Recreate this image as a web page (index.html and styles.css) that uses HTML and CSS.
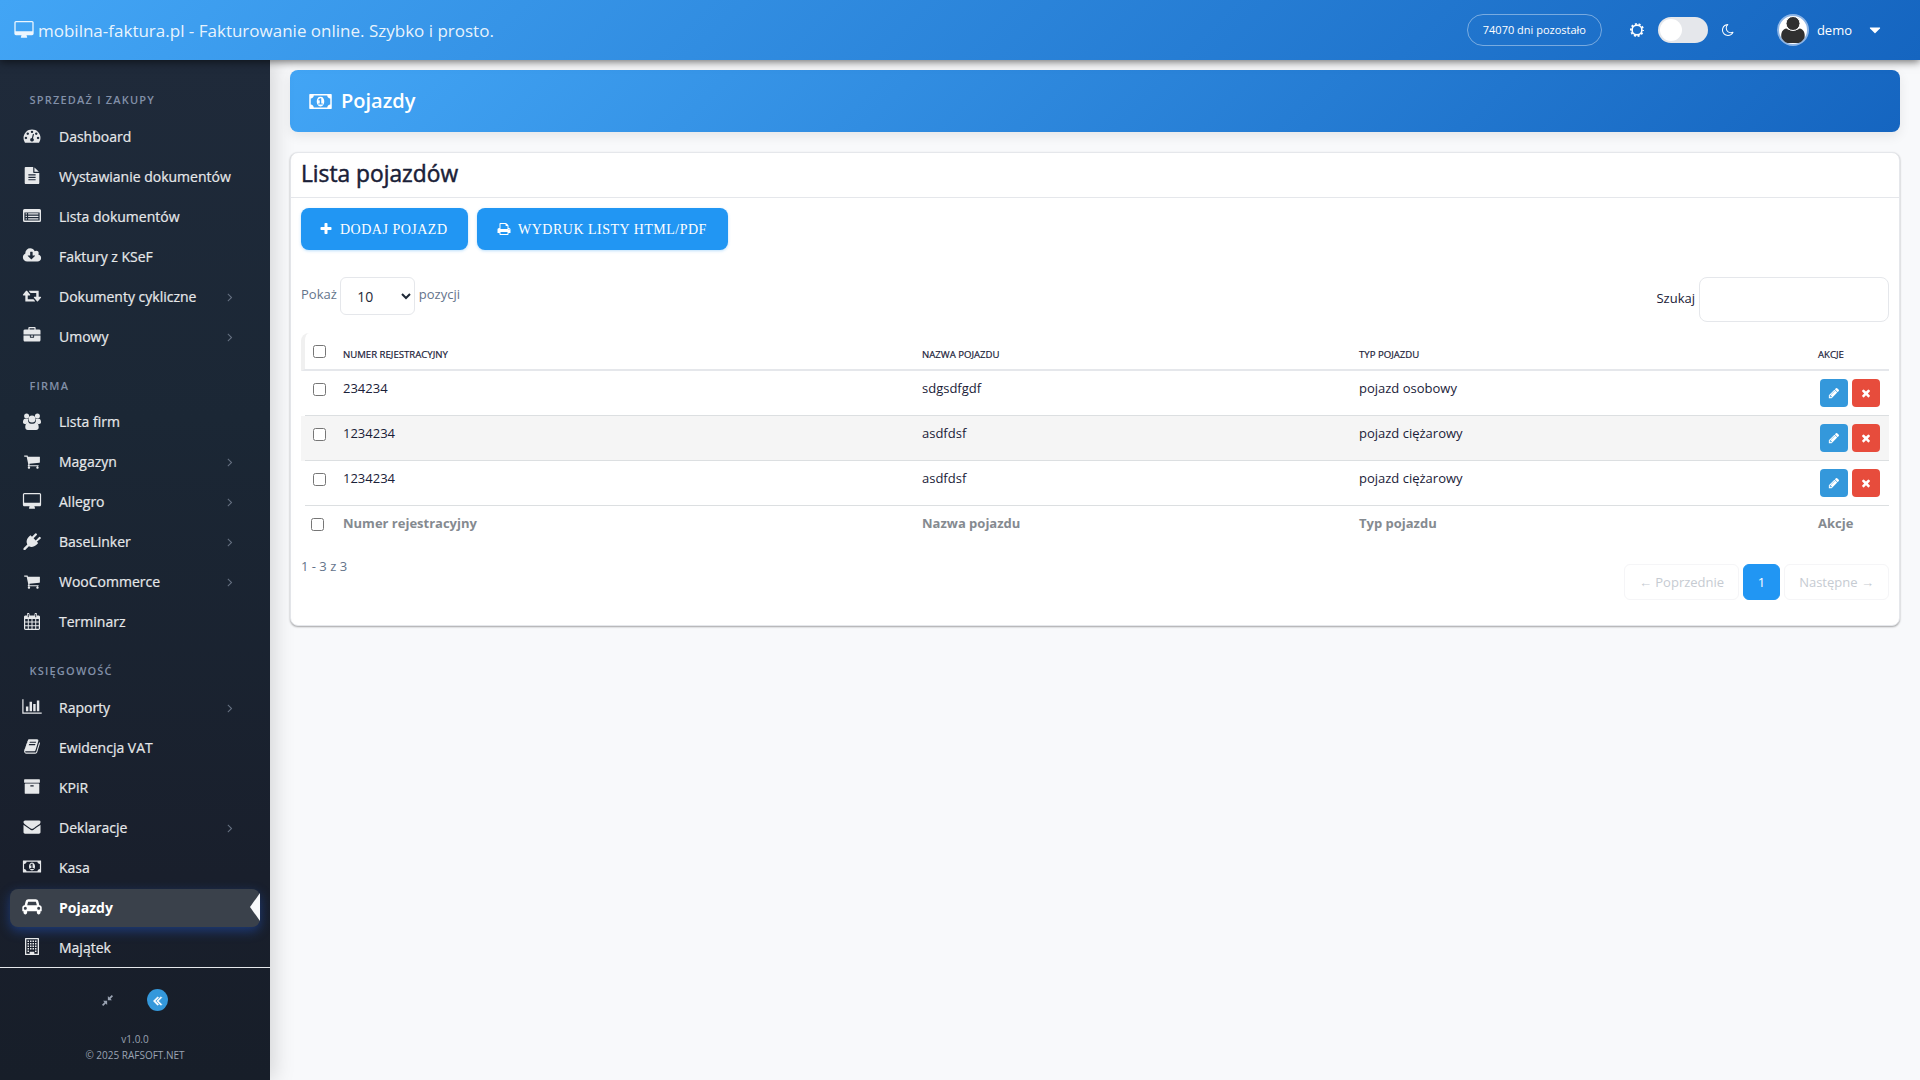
FILE: index.html
```html
<!DOCTYPE html>
<html lang="pl">
<head>
    <meta charset="UTF-8">
    <meta name="viewport" content="width=device-width, initial-scale=1.0">
    <title>Pojazdy - mobilna-faktura.pl</title>
    <link rel="stylesheet" href="styles.css">
</head>
<body>
    <!-- Icon sprite -->
    <svg class="sprite" width="0" height="0">
        <symbol id="desktop" viewBox="-64 0 1920 1792"><path d="M1728 992v-832q0-13-9.500-22.500t-22.500-9.500h-1600q-13 0-22.500 9.500t-9.500 22.500v832q0 13 9.500 22.500t22.500 9.500h1600q13 0 22.500-9.500t9.500-22.500zm128-832v1088q0 66-47 113t-113 47h-544q0 37 16 77.500t32 71 16 43.500q0 26-19 45t-45 19h-512q-26 0-45-19t-19-45q0-14 16-44t32-70 16-78h-544q-66 0-113-47t-47-113v-1088q0-66 47-113t113-47h1600q66 0 113 47t47 113z"/></symbol>
        <symbol id="moon" viewBox="0 0 1792 1792"><path d="M1390 1303q-54 9-110 9-182 0-337-90t-245-245-90-337q0-192 104-357-201 60-328.500 229t-127.500 384q0 130 51 248.500t136.500 204 204 136.500 248.500 51q144 0 273.500-61.500t220.500-171.500zm203-85q-94 203-283.500 324.500t-413.500 121.500q-156 0-298-61t-245-164-164-245-61-298q0-153 57.500-292.500t156-241.500 235.500-164.500 290-68.500q44-2 61 39 18 41-15 72-86 78-131.500 181.500t-45.500 218.500q0 148 73 273t198 198 273 73q118 0 228-51 41-18 72 13 14 14 17.500 34t-4.500 38z"/></symbol>
        <symbol id="sun" viewBox="0 0 14 14"><circle cx="7" cy="7" r="4.900" fill="none" stroke="currentColor" stroke-width="1.600"/><circle cx="7" cy="7" r="6.100" fill="none" stroke="currentColor" stroke-width="1.800" stroke-dasharray="2 1.833" stroke-dashoffset="1"/></symbol>
        <symbol id="plus" viewBox="0 0 1792 1792"><path d="M1600 736v192q0 40-28 68t-68 28h-416v416q0 40-28 68t-68 28h-192q-40 0-68-28t-28-68v-416h-416q-40 0-68-28t-28-68v-192q0-40 28-68t68-28h416v-416q0-40 28-68t68-28h192q40 0 68 28t28 68v416h416q40 0 68 28t28 68z"/></symbol>
        <symbol id="times" viewBox="0 0 1792 1792"><path d="M1490 1322q0 40-28 68l-136 136q-28 28-68 28t-68-28l-294-294-294 294q-28 28-68 28t-68-28l-136-136q-28-28-28-68t28-68l294-294-294-294q-28-28-28-68t28-68l136-136q28-28 68-28t68 28l294 294 294-294q28-28 68-28t68 28l136 136q28 28 28 68t-28 68l-294 294 294 294q28 28 28 68z"/></symbol>
        <symbol id="pencil" viewBox="0 0 1792 1792"><path d="M491 1536l91-91-235-235-91 91v107h128v128h107zm523-928q0-22-22-22-10 0-17 7l-542 542q-7 7-7 17 0 22 22 22 10 0 17-7l542-542q7-7 7-17zm-54-192l416 416-832 832h-416v-416zm683 96q0 53-37 90l-166 166-416-416 166-165q36-38 90-38 53 0 91 38l235 234q37 39 37 91z"/></symbol>
        <symbol id="print" viewBox="0 0 1792 1792"><path d="M448 1536h896v-256h-896v256zm0-640h896v-384h-160q-40 0-68-28t-28-68v-160h-640v640zm1152 64q0-26-19-45t-45-19-45 19-19 45 19 45 45 19 45-19 19-45zm128 0v416q0 13-9.500 22.500t-22.500 9.500h-224v160q0 40-28 68t-68 28h-960q-40 0-68-28t-28-68v-160h-224q-13 0-22.500-9.500t-9.500-22.500v-416q0-79 56.500-135.500t135.500-56.500h64v-544q0-40 28-68t68-28h672q40 0 88 20t76 48l152 152q28 28 48 76t20 88v256h64q79 0 135.500 56.500t56.500 135.500z"/></symbol>
        <symbol id="angle-right" viewBox="0 0 1792 1792"><path d="M1171 960q0 13-10 23l-466 466q-10 10-23 10t-23-10l-50-50q-10-10-10-23t10-23l393-393-393-393q-10-10-10-23t10-23l50-50q10-10 23-10t23 10l466 466q10 10 10 23z"/></symbol>
        <symbol id="double-left" viewBox="0 0 1792 1792"><path d="M1011 1376q0 13-10 23l-50 50q-10 10-23 10t-23-10l-466-466q-10-10-10-23t10-23l466-466q10-10 23-10t23 10l50 50q10 10 10 23t-10 23l-393 393 393 393q10 10 10 23zm384 0q0 13-10 23l-50 50q-10 10-23 10t-23-10l-466-466q-10-10-10-23t10-23l466-466q10-10 23-10t23 10l50 50q10 10 10 23t-10 23l-393 393 393 393q10 10 10 23z"/></symbol>
        <symbol id="caret-down" viewBox="0 0 1792 1792"><path d="M1408 704q0 26-19 45l-448 448q-19 19-45 19t-45-19l-448-448q-19-19-19-45t19-45 45-19h896q26 0 45 19t19 45z"/></symbol>
        <symbol id="compress" viewBox="0 0 12 12"><path d="M5.600 6.400v4.400l-1.500-1.500L1.300 12 0 10.700l2.700-2.800-1.500-1.500zM6.400 5.600V1.200l1.500 1.500L10.700 0 12 1.300 9.300 4.100l1.500 1.500z"/></symbol>
        <symbol id="cart" viewBox="0 0 1792 1792"><path d="M704 1536q0 52-38 90t-90 38-90-38-38-90 38-90 90-38 90 38 38 90zm896 0q0 52-38 90t-90 38-90-38-38-90 38-90 90-38 90 38 38 90zm128-1088v512q0 24-16.500 42.500t-40.500 21.500l-1044 122q13 60 13 70 0 16-24 64h920q26 0 45 19t19 45-19 45-45 19h-1024q-26 0-45-19t-19-45q0-11 8-31.500t16-36 21.500-40 15.500-29.500l-177-823h-204q-26 0-45-19t-19-45 19-45 45-19h256q16 0 28.500 6.500t19.500 15.500 13 24.500 8 26 5.500 29.500 4.500 26h1201q26 0 45 19t19 45z"/></symbol>
        <symbol id="file" viewBox="0 0 1792 1792"><path d="M1596 476q14 14 28 36h-472v-472q22 14 36 28zm-476 164h544v1056q0 40-28 68t-68 28h-1344q-40 0-68-28t-28-68v-1600q0-40 28-68t68-28h800v544q0 40 28 68t68 28zm160 736v-64q0-14-9-23t-23-9h-704q-14 0-23 9t-9 23v64q0 14 9 23t23 9h704q14 0 23-9t9-23zm0-256v-64q0-14-9-23t-23-9h-704q-14 0-23 9t-9 23v64q0 14 9 23t23 9h704q14 0 23-9t9-23zm0-256v-64q0-14-9-23t-23-9h-704q-14 0-23 9t-9 23v64q0 14 9 23t23 9h704q14 0 23-9t9-23z"/></symbol>
        <symbol id="tachometer" viewBox="0 0 1792 1792"><path d="M384 1152q0-53-37.500-90.500t-90.500-37.500-90.500 37.500-37.500 90.500 37.500 90.500 90.500 37.500 90.500-37.500 37.500-90.500zm192-448q0-53-37.500-90.500t-90.500-37.500-90.500 37.500-37.500 90.500 37.500 90.500 90.500 37.500 90.500-37.500 37.500-90.500zm428 481l101-382q6-26-7.500-48.500t-38.500-29.500-48 6.500-30 39.500l-101 382q-60 5-107 43.500t-63 98.500q-20 77 20 146t117 89 146-20 89-117q16-60-6-117t-72-91zm660-33q0-53-37.500-90.500t-90.500-37.500-90.500 37.500-37.500 90.500 37.500 90.500 90.500 37.500 90.500-37.500 37.500-90.500zm-640-640q0-53-37.500-90.500t-90.500-37.500-90.500 37.500-37.500 90.500 37.500 90.500 90.500 37.500 90.500-37.500 37.500-90.500zm448 192q0-53-37.500-90.500t-90.500-37.500-90.500 37.500-37.500 90.500 37.500 90.500 90.500 37.500 90.500-37.500 37.500-90.500zm320 448q0 261-141 483-19 29-54 29h-1402q-35 0-54-29-141-221-141-483 0-182 71-348t191-286 286-191 348-71 348 71 286 191 191 286 71 348z"/></symbol>
        <symbol id="list-alt" viewBox="0 0 18 17"><path fill-rule="evenodd" d="M1.500 2h15A1.500 1.500 0 0 1 18 3.500v10a1.500 1.500 0 0 1-1.500 1.500h-15A1.500 1.500 0 0 1 0 13.500v-10A1.500 1.500 0 0 1 1.500 2zM1.400 5.400v8.200h15.200V5.400zM2.600 6.300h1.300v1.200H2.600zm2.500 0h10.300v1.200H5.100zM2.600 8.800h1.300V10H2.600zm2.500 0h10.300V10H5.100zm-2.500 2.500h1.300v1.200H2.600zm2.500 0h10.300v1.200H5.100z"/></symbol>
        <symbol id="cloud" viewBox="0 0 1920 1792"><path d="M1280 928q0-14-9-23t-23-9h-224v-352q0-13-9.500-22.500t-22.500-9.500h-192q-13 0-22.500 9.500t-9.500 22.500v352h-224q-13 0-22.500 9.500t-9.500 22.500q0 14 9 23l352 352q9 9 23 9t23-9l351-351q10-12 10-24zm640 224q0 159-112.500 271.500t-271.500 112.500h-1088q-185 0-316.500-131.500t-131.500-316.500q0-130 70-240t188-165q-2-30-2-43 0-212 150-362t362-150q156 0 285.500 87t188.500 231q71-62 166-62 106 0 181 75t75 181q0 76-41 138 130 31 213.500 135.500t83.500 238.500z"/></symbol>
        <symbol id="retweet" viewBox="0 0 1920 1792"><path d="M1280 1504q0 13-9.500 22.500t-22.500 9.500h-960q-8 0-13.500-2t-9-7-5.500-8-3-11.500-1-11.500v-600h-192q-26 0-45-19t-19-45q0-24 15-41l320-384q19-22 49-22t49 22l320 384q15 17 15 41 0 26-19 45t-45 19h-192v384h576q16 0 25 11l160 192q7 10 7 21zm640-416q0 24-15 41l-320 384q-20 23-49 23t-49-23l-320-384q-15-17-15-41 0-26 19-45t45-19h192v-384h-576q-16 0-25-12l-160-192q-7-9-7-20 0-13 9.500-22.500t22.500-9.500h960q8 0 13.500 2t9 7 5.500 8 3 11.500 1 11.500v600h192q26 0 45 19t19 45z"/></symbol>
        <symbol id="briefcase" viewBox="0 0 1792 1792"><path d="M640 256h512v-128h-512v128zm1152 640v480q0 66-47 113t-113 47h-1472q-66 0-113-47t-47-113v-480h672v160q0 26 19 45t45 19h320q26 0 45-19t19-45v-160h672zm-768 0v128h-256v-128h256zm768-480v384h-1792v-384q0-66 47-113t113-47h352v-160q0-40 28-68t68-28h576q40 0 68 28t28 68v160h352q66 0 113 47t47 113z"/></symbol>
        <symbol id="users" viewBox="0 0 18 17"><circle cx="3.600" cy="2.900" r="2.500"/><circle cx="14.400" cy="2.900" r="2.500"/><path d="M2 5.700h3.200a4.500 4.500 0 0 0 .7 4.100C4.600 9.900 3.800 10.300 3 11H1.800C.7 11 0 10.400 0 9.300 0 7.600.5 5.700 2 5.700zM16 5.700h-3.200a4.500 4.500 0 0 1-.7 4.100c1.300.1 2.100.5 2.900 1.200h1.200c1.100 0 1.800-.6 1.800-1.700 0-1.700-.5-3.600-2-3.600z"/><circle cx="9" cy="6.100" r="3.500"/><path d="M5.200 9.500c1 .8 2.200 1.300 3.800 1.300s2.800-.5 3.800-1.300c2.200 0 2.900 2.600 2.900 4.900 0 1.500-1 2.500-2.500 2.500H4.800c-1.500 0-2.500-1-2.500-2.500 0-2.300.7-4.900 2.900-4.900z"/></symbol>
        <symbol id="plug" viewBox="0 0 18 17"><path d="M17.500 4.200a1.100 1.100 0 0 0-1.600 0L12.700 7.400 10.600 5.300l3.200-3.200A1.150 1.150 0 0 0 12.200.5L9 3.700 7.500 2.200 6.100 3.600C3.600 6.100 2.900 9.100 4.300 11.500L.5 15.300V17h1.700l3.700-3.700c2.400 1.400 5.400.7 7.900-1.800l1.400-1.400-1.400-1.400 3.700-3a1.100 1.100 0 0 0 0-1.500z"/></symbol>
        <symbol id="calendar" viewBox="0 0 16 17"><path fill-rule="evenodd" d="M1.500 2.500H3V1.200C3 .5 3.500 0 4.200 0s1.300.5 1.300 1.200v1.300h5V1.200c0-.7.500-1.200 1.300-1.200S13 .5 13 1.200v1.300h1.500c.8 0 1.500.6 1.500 1.300v11.800c0 .8-.7 1.400-1.500 1.400h-13C.7 17 0 16.400 0 15.600V3.800c0-.7.700-1.300 1.500-1.300zM1.200 6.100v2.500h2.600V6.100zm3.600 0v2.500h2.700V6.100zm3.700 0v2.500h2.700V6.100zm3.700 0v2.500h2.600V6.100zM1.200 9.500v2.700h2.600V9.500zm3.600 0v2.700h2.700V9.500zm3.700 0v2.700h2.700V9.500zm3.700 0v2.700h2.600V9.500zM1.200 13.200v2.600h2.600v-2.600zm3.600 0v2.600h2.700v-2.600zm3.700 0v2.600h2.700v-2.600zm3.700 0v2.600h2.600v-2.600zM3.800 1v3.200h.9V1zm7.500 0v3.200h.9V1z"/></symbol>
        <symbol id="chart" viewBox="0 0 2048 1792"><path d="M640 896v512h-256v-512h256zm384-512v1024h-256v-1024h256zm1024 1152v128h-2048v-1536h128v1408h1920zm-640-896v768h-256v-768h256zm384-384v1152h-256v-1152h256z"/></symbol>
        <symbol id="book" viewBox="0 0 1792 1792"><path d="M1703 478q40 57 18 129l-275 906q-19 64-76.500 107.500t-122.500 43.500h-923q-77 0-148.500-53.500t-99.500-131.500q-24-67-2-127 0-4 3-27t4-37q1-8-3-21.500t-3-19.500q2-11 8-21t16.500-23.500 16.500-23.500q23-38 45-91.500t30-91.500q3-10 .5-30t-.5-28q3-11 17-28t17-23q21-36 42-92t25-90q1-9-2.500-32t.5-28q4-13 22-30.500t22-22.500q19-26 42.500-84.500t27.500-96.500q1-8-3-25.500t-2-26.500q2-8 9-18t18-23 17-21q8-12 16.500-30.500t15-35 16-36 19.500-32 26.500-23.500 36-11.500 47.500 5.500l-1 3q38-9 51-9h761q74 0 114 56t18 130l-274 906q-36 119-71.500 153.500t-128.500 34.500h-869q-27 0-38 15-11 16-1 43 24 70 144 70h923q29 0 56-15.500t35-41.500l300-987q7-22 5-57 38 15 59 43zm-1064 2q-4 13 2 22.500t20 9.500h608q13 0 25.500-9.500t16.500-22.500l21-64q4-13-2-22.500t-20-9.500h-608q-13 0-25.500 9.500t-16.500 22.500zm-83 256q-4 13 2 22.500t20 9.500h608q13 0 25.500-9.500t16.500-22.500l21-64q4-13-2-22.500t-20-9.500h-608q-13 0-25.500 9.500t-16.500 22.500z"/></symbol>
        <symbol id="archive" viewBox="0 0 1792 1792"><path d="M1088 832q0-26-19-45t-45-19h-256q-26 0-45 19t-19 45 19 45 45 19h256q26 0 45-19t19-45zm576-192v960q0 26-19 45t-45 19h-1408q-26 0-45-19t-19-45v-960q0-26 19-45t45-19h1408q26 0 45 19t19 45zm64-448v256q0 26-19 45t-45 19h-1536q-26 0-45-19t-19-45v-256q0-26 19-45t45-19h1536q26 0 45 19t19 45z"/></symbol>
        <symbol id="envelope" viewBox="0 0 1792 1792"><path d="M1792 710v794q0 66-47 113t-113 47h-1472q-66 0-113-47t-47-113v-794q44 49 101 87 362 246 497 345 57 42 92.500 65.500t94.500 48 110 24.500h2q51 0 110-24.500t94.500-48 92.500-65.500q170-123 498-345 57-39 100-87zm0-294q0 79-49 151t-122 123q-376 261-468 325-10 7-42.500 31t-54 38.500-52 32.500-57.500 27-50 9h-2q-23 0-50-9t-57.500-27-52-32.500-54-38.500-42.500-31q-91-64-262-182.500t-205-142.500q-62-42-117-115.500t-55-136.500q0-78 41.500-130t118.500-52h1472q65 0 112.500 47t47.500 113z"/></symbol>
        <symbol id="money" viewBox="0 0 1920 1792"><path d="M768 1152h384v-96h-128v-448h-114l-148 137 77 80q42-37 55-57h2v288h-128v96zm512-256q0 70-21 142t-59.500 134-101.500 101-138 39-138-39-101.500-101-59.500-134-21-142 21-142 59.500-134 101.500-101 138-39 138 39 101.500 101 59.500 134 21 142zm512 256v-512q-106 0-181-75t-75-181h-1152q0 106-75 181t-181 75v512q106 0 181 75t75 181h1152q0-106 75-181t181-75zm128-832v1152q0 26-19 45t-45 19h-1792q-26 0-45-19t-19-45v-1152q0-26 19-45t45-19h1792q26 0 45 19t19 45z"/></symbol>
        <symbol id="car" viewBox="0 0 2048 1792"><path d="M480 1088q0-66-47-113t-113-47-113 47-47 113 47 113 113 47 113-47 47-113zm36-320h1016l-89-357q-2-8-14-17.500t-21-9.500h-768q-9 0-21 9.500t-14 17.500zm1372 320q0-66-47-113t-113-47-113 47-47 113 47 113 113 47 113-47 47-113zm160-96v384q0 14-9 23t-23 9h-96v128q0 80-56 136t-136 56-136-56-56-136v-128h-1024v128q0 80-56 136t-136 56-136-56-56-136v-128h-96q-14 0-23-9t-9-23v-384q0-93 65.500-158.500t158.500-65.500h28l105-419q23-94 104-157.500t179-63.500h768q98 0 179 63.500t104 157.500l105 419h28q93 0 158.500 65.500t65.500 158.500z"/></symbol>
        <symbol id="building" viewBox="0 0 14 17"><path fill-rule="evenodd" d="M.6 0h12.800c.3 0 .6.300.6.600v15.800c0 .3-.3.600-.6.600H.6c-.3 0-.6-.3-.6-.6V.6C0 .3.300 0 .6 0zM1.300 1.300v14.400h3.400v-2h4.600v2h3.400V1.300z"/><path d="M2.500 2.400h1.500v1.500H2.500zm2.500 0h1.500v1.500H5zm2.500 0H9v1.500H7.500zm2.500 0h1.500v1.500H10zM2.500 4.900h1.500v1.500H2.500zm2.500 0h1.500v1.500H5zm2.500 0H9v1.500H7.500zm2.500 0h1.500v1.500H10zM2.500 7.400h1.500v1.500H2.500zm2.500 0h1.500v1.500H5zm2.500 0H9v1.500H7.500zm2.500 0h1.500v1.500H10zM2.500 9.900h1.500v1.500H2.500zm2.500 0h1.500v1.500H5zm2.500 0H9v1.500H7.500zm2.500 0h1.500v1.500H10zM2.500 12.400h1.500v1.500H2.500zm7.500 0h1.500v1.500H10z"/></symbol>
    </svg>

    <header class="topbar">
        <a class="brand" href="#"><svg><use href="#desktop"/></svg><span>mobilna-faktura.pl - Fakturowanie online. Szybko i prosto.</span></a>
        <div class="topbar-right">
            <span class="days-left">74070 dni pozostało</span>
            <div class="theme-switch">
                <svg><use href="#sun"/></svg>
                <span class="switch"><span class="knob"></span></span>
                <svg><use href="#moon"/></svg>
            </div>
            <a class="user" href="#">
                <svg class="avatar" viewBox="0 0 32 32"><circle cx="16" cy="16" r="15" fill="#fff" stroke="#8db5e6" stroke-width="2"/><path d="M4.500 24c-1-5 1-9 5-9.500 2 2.500 11 2.500 13 0 4 .5 6 4.500 5 9.500-2 3-4 4.500-6 5h-11c-2-.5-4-2-6-5z" fill="#303030"/><circle cx="16" cy="9.500" r="7" fill="#303030" stroke="#fff"/></svg>
                <span>demo</span>
                <svg class="caret"><use href="#caret-down"/></svg>
            </a>
        </div>
    </header>

    <div class="layout">
        <aside class="sidebar">
            <nav class="menu">
                <h6>Sprzedaż i zakupy</h6>
                <a href="#"><svg><use href="#tachometer"/></svg><span>Dashboard</span></a>
                <a href="#"><svg><use href="#file"/></svg><span>Wystawianie dokumentów</span></a>
                <a href="#"><svg><use href="#list-alt"/></svg><span>Lista dokumentów</span></a>
                <a href="#"><svg><use href="#cloud"/></svg><span>Faktury z KSeF</span></a>
                <a href="#"><svg><use href="#retweet"/></svg><span>Dokumenty cykliczne</span><svg class="arrow"><use href="#angle-right"/></svg></a>
                <a href="#"><svg><use href="#briefcase"/></svg><span>Umowy</span><svg class="arrow"><use href="#angle-right"/></svg></a>
                <h6>Firma</h6>
                <a href="#"><svg><use href="#users"/></svg><span>Lista firm</span></a>
                <a href="#"><svg><use href="#cart"/></svg><span>Magazyn</span><svg class="arrow"><use href="#angle-right"/></svg></a>
                <a href="#"><svg><use href="#desktop"/></svg><span>Allegro</span><svg class="arrow"><use href="#angle-right"/></svg></a>
                <a href="#"><svg><use href="#plug"/></svg><span>BaseLinker</span><svg class="arrow"><use href="#angle-right"/></svg></a>
                <a href="#"><svg><use href="#cart"/></svg><span>WooCommerce</span><svg class="arrow"><use href="#angle-right"/></svg></a>
                <a href="#"><svg><use href="#calendar"/></svg><span>Terminarz</span></a>
                <h6>Księgowość</h6>
                <a href="#"><svg><use href="#chart"/></svg><span>Raporty</span><svg class="arrow"><use href="#angle-right"/></svg></a>
                <a href="#"><svg><use href="#book"/></svg><span>Ewidencja VAT</span></a>
                <a href="#"><svg><use href="#archive"/></svg><span>KPiR</span></a>
                <a href="#"><svg><use href="#envelope"/></svg><span>Deklaracje</span><svg class="arrow"><use href="#angle-right"/></svg></a>
                <a href="#"><svg><use href="#money"/></svg><span>Kasa</span></a>
                <a href="#" class="active"><svg><use href="#car"/></svg><span>Pojazdy</span></a>
                <a href="#"><svg><use href="#building"/></svg><span>Majątek</span></a>
            </nav>
            <div class="sidebar-footer">
                <div class="sidebar-tools">
                    <svg class="compress"><use href="#compress"/></svg>
                    <span class="collapse"><svg><use href="#double-left"/></svg></span>
                </div>
                <p>v1.0.0</p>
                <p>© 2025 RAFSOFT.NET</p>
            </div>
        </aside>

        <main class="content">
            <div class="page-header">
                <svg><use href="#money"/></svg>
                <h1>Pojazdy</h1>
            </div>

            <section class="card">
                <h2>Lista pojazdów</h2>
                <div class="card-body">
                    <div class="buttons">
                        <a class="btn" href="#"><svg><use href="#plus"/></svg><span>DODAJ POJAZD</span></a>
                        <a class="btn btn-print" href="#"><svg><use href="#print"/></svg><span>WYDRUK LISTY HTML/PDF</span></a>
                    </div>

                    <div class="filters">
                        <label class="length">Pokaż
                            <select><option>10</option><option>25</option><option>50</option></select>
                            pozycji</label>
                        <label class="search">Szukaj <input type="text"></label>
                    </div>

                    <table class="vehicles">
                        <colgroup><col class="col-check"><col class="col-number"><col class="col-name"><col class="col-type"><col class="col-actions"></colgroup>
                        <thead>
                            <tr><th><input type="checkbox"></th><th>Numer rejestracyjny</th><th>Nazwa pojazdu</th><th>Typ pojazdu</th><th>Akcje</th></tr>
                        </thead>
                        <tbody>
                            <tr>
                                <td><input type="checkbox"></td><td>234234</td><td>sdgsdfgdf</td><td>pojazd osobowy</td>
                                <td><div class="actions"><a class="edit" href="#"><svg><use href="#pencil"/></svg></a><a class="delete" href="#"><svg><use href="#times"/></svg></a></div></td>
                            </tr>
                            <tr>
                                <td><input type="checkbox"></td><td>1234234</td><td>asdfdsf</td><td>pojazd ciężarowy</td>
                                <td><div class="actions"><a class="edit" href="#"><svg><use href="#pencil"/></svg></a><a class="delete" href="#"><svg><use href="#times"/></svg></a></div></td>
                            </tr>
                            <tr>
                                <td><input type="checkbox"></td><td>1234234</td><td>asdfdsf</td><td>pojazd ciężarowy</td>
                                <td><div class="actions"><a class="edit" href="#"><svg><use href="#pencil"/></svg></a><a class="delete" href="#"><svg><use href="#times"/></svg></a></div></td>
                            </tr>
                        </tbody>
                        <tfoot>
                            <tr><th><input type="checkbox"></th><th>Numer rejestracyjny</th><th>Nazwa pojazdu</th><th>Typ pojazdu</th><th>Akcje</th></tr>
                        </tfoot>
                    </table>

                    <div class="table-footer">
                        <span class="info">1 - 3 z 3</span>
                        <div class="pagination">
                            <a class="prev" href="#"><span>←</span> Poprzednie</a>
                            <a class="current" href="#">1</a>
                            <a class="next" href="#">Następne <span>→</span></a>
                        </div>
                    </div>
                </div>
            </section>
        </main>
    </div>
</body>
</html>
```

FILE: styles.css
```css
* {
    box-sizing: border-box;
}
body {
    font-family: "Open Sans", "Liberation Sans", sans-serif;
    font-size: 13px;
    line-height: 20px;
    margin: 0;
    height: 1080px;
    overflow: hidden;
    background-color: #f8f9fb;
    color: #1a2138;
}
a {
    color: inherit;
    text-decoration: none;
}
h1, h2, h6, p {
    margin: 0;
}
svg {
    fill: currentColor;
    flex: none;
}
.sprite {
    position: absolute;
}

/* Top bar */
.topbar {
    position: relative;
    z-index: 2;
    display: flex;
    justify-content: space-between;
    align-items: center;
    height: 60px;
    padding: 0 36px 0 14px;
    background: linear-gradient(135deg, #42a5f5 0%, #1565c0 100%);
    box-shadow: 0 2px 8px rgba(0, 0, 0, 0.55);
    color: #fff;
}
.brand {
    display: flex;
    align-items: center;
    gap: 4px;
    font-size: 17px;
    color: rgba(255, 255, 255, 0.9);
}
.brand span {
    padding-top: 1px;
}
.brand svg {
    width: 20px;
    height: 18px;
}
.topbar-right {
    display: flex;
    align-items: center;
}
.days-left {
    width: 135px;
    height: 32px;
    line-height: 30px;
    text-align: center;
    font-size: 11px;
    border: 1px solid rgba(255, 255, 255, 0.4);
    border-radius: 16px;
}
.theme-switch {
    display: flex;
    align-items: center;
    margin-left: 28px;
}
.theme-switch svg {
    width: 14px;
    height: 14px;
}
.switch {
    width: 50px;
    height: 26px;
    margin: 0 13px 0 14px;
    padding: 2px;
    border-radius: 13px;
    background-color: #e5e7eb;
}
.knob {
    display: block;
    width: 22px;
    height: 22px;
    border-radius: 50%;
    background-color: #fff;
}
.user {
    display: flex;
    align-items: center;
    margin-left: 42px;
}
.avatar {
    width: 32px;
    height: 32px;
    margin-right: 8px;
}
.caret {
    width: 18px;
    height: 18px;
    margin-left: 14px;
}

.layout {
    display: flex;
    height: 1020px;
}

/* Sidebar */
.sidebar {
    position: relative;
    z-index: 1;
    display: flex;
    flex-direction: column;
    width: 270px;
    background: linear-gradient(180deg, #1f2a3a 0%, #1b2735 35%, #191f2c 80%, #171e29 100%);
    box-shadow: 4px 0 20px rgba(0, 0, 0, 0.15);
}
.menu {
    height: 907px;
    padding: 12.3px 10px 0;
    overflow: hidden;
}
.menu h6 {
    height: 45.5px;
    padding: 19.9px 19.5px 0;
    font-size: 11px;
    line-height: 16px;
    font-weight: 600;
    letter-spacing: 1.2px;
    text-transform: uppercase;
    color: #8290a8;
}
.menu a {
    position: relative;
    display: flex;
    align-items: center;
    height: 38px;
    margin-bottom: 2px;
    padding: 0 22px 0 11px;
    border-radius: 8px;
    font-size: 14px;
    font-weight: 500;
    -webkit-text-stroke: 0.2px;
    color: #e6e8ea;
}
.menu a > svg:first-child {
    width: 22px;
    height: 17px;
    margin: 0 16px 2px 0;
}
.menu .arrow {
    width: 14px;
    height: 14px;
    margin-left: auto;
    margin-right: 1px;
    color: #657080;
}
.menu a.active {
    font-weight: 700;
    -webkit-text-stroke: 0;
    color: #fff;
    background-color: #3a414b;
    box-shadow: 0 4px 12px rgba(37, 99, 235, 0.4);
}
.menu a.active::after {
    content: "";
    position: absolute;
    right: 0;
    top: 4px;
    border: 14px solid transparent;
    border-left-width: 0;
    border-right: 10px solid #f8f9fb;
}
.sidebar-footer {
    flex: 1;
    padding-top: 21px;
    border-top: 1px solid #e5e7eb;
    text-align: center;
    font-size: 10px;
    line-height: 16px;
    color: #9aa3b2;
}
.sidebar-tools {
    display: flex;
    justify-content: center;
    align-items: center;
    gap: 34px;
    height: 22px;
    margin-bottom: 20px;
}
.compress {
    width: 11px;
    height: 11px;
}
.collapse {
    display: flex;
    align-items: center;
    justify-content: center;
    width: 21px;
    height: 22px;
    border-radius: 50%;
    background-color: #3498db;
    color: #fff;
}
.collapse svg {
    width: 15px;
    height: 15px;
    stroke: currentColor;
    stroke-width: 80px;
}

/* Content */
.content {
    flex: 1;
    padding: 10px 20px;
}
.page-header {
    display: flex;
    align-items: center;
    gap: 9px;
    height: 62px;
    margin-bottom: 20px;
    padding: 0 19px;
    border-radius: 8px;
    background: linear-gradient(135deg, #42a5f5 0%, #1565c0 100%);
    box-shadow: 0 4px 12px rgba(0, 0, 0, 0.08);
    color: #fff;
}
.page-header svg {
    width: 23px;
    height: 21px;
}
.page-header h1 {
    font-size: 20px;
    font-weight: 600;
}
.card {
    height: 474px;
    border: 1px solid #e5e7eb;
    border-radius: 8px;
    background-color: #fff;
    box-shadow: 0 1px 2px rgba(0, 0, 0, 0.35);
}
.card h2 {
    height: 45px;
    padding-left: 10px;
    border-bottom: 1px solid #e5e7eb;
    font-size: 22.75px;
    line-height: 42px;
    font-weight: 500;
    -webkit-text-stroke: 0.5px;
}
.card-body {
    padding: 10px;
}
.buttons {
    display: flex;
    gap: 9px;
}
.btn {
    display: flex;
    align-items: center;
    gap: 6px;
    width: 167px;
    height: 42px;
    padding-left: 18px;
    border-radius: 8px;
    background-color: #2196f3;
    box-shadow: 0 1px 3px rgba(33, 150, 243, 0.3);
    font-family: "Liberation Serif", serif;
    font-size: 14px;
    letter-spacing: 0.5px;
    color: #fff;
}
.btn svg {
    width: 14px;
    height: 14px;
    margin-right: 1px;
}
.btn span {
    padding-top: 2px;
}
.btn-print {
    width: 251px;
    padding-left: 20px;
}
.filters {
    display: flex;
    justify-content: space-between;
    align-items: flex-start;
    height: 83px;
    padding-top: 27px;
}
.length {
    display: flex;
    gap: 3.5px;
    line-height: 34px;
    color: #64748b;
}
.length select {
    width: 75px;
    height: 38px;
    padding: 0 0 0 12px;
    border: 1px solid #e5e7eb;
    border-radius: 6px;
    background-color: #fff;
    font-family: inherit;
    font-size: 14px;
    color: #1f2937;
}
.search {
    display: flex;
    gap: 4px;
    line-height: 42px;
}
.search input {
    width: 190px;
    height: 45px;
    border: 1px solid #e5e7eb;
    border-radius: 8px;
    background-color: #fff;
}

/* Vehicle table */
.vehicles {
    width: 100%;
    table-layout: fixed;
    border-collapse: separate;
    border-spacing: 0;
}
.col-check {
    width: 34px;
}
.col-number {
    width: 579px;
}
.col-name {
    width: 437px;
}
.col-type {
    width: 459px;
}
.vehicles th,
.vehicles td {
    padding: 7px 8px 8px;
    text-align: left;
    vertical-align: top;
}
.vehicles input {
    display: block;
    width: 13px;
    height: 13px;
    margin: 5px 0 0;
}
.vehicles thead th {
    height: 38px;
    padding-top: 12px;
    padding-bottom: 4px;
    border-bottom: 2px solid #e5e7eb;
    font-size: 9.6px;
    font-weight: 500;
    -webkit-text-stroke: 0.2px;
    text-transform: uppercase;
}
.vehicles thead input {
    margin-top: 0;
}
.vehicles thead th:first-child {
    border-left: 4px solid #f0f0f0;
    border-top-left-radius: 8px;
}
.vehicles tbody td {
    height: 45px;
    border-bottom: 1px solid #dcdfe1;
}
/* the row line starts after the 4px marker strip */
.vehicles tbody td:first-child {
    padding-left: 12px;
    border-bottom: 0;
    background: linear-gradient(#dcdfe1, #dcdfe1) 4px 100% / 100% 1px no-repeat;
}
.vehicles tbody tr:nth-child(even) {
    background-color: #f5f5f5;
}
.vehicles tfoot th {
    height: 36px;
    font-weight: 700;
    color: #858a90;
}
.vehicles tfoot th:first-child {
    padding-left: 10px;
}
.actions {
    display: flex;
    gap: 4px;
    margin: 1px 0 0 2px;
}
.actions a {
    display: flex;
    align-items: center;
    justify-content: center;
    width: 28px;
    height: 28px;
    border-radius: 4px;
    color: #fff;
}
.actions svg {
    width: 12px;
    height: 12px;
    margin: 0 1px 1px 0;
}
.edit {
    background-color: #3498db;
}
.delete {
    background-color: #e74c3c;
}
.table-footer {
    display: flex;
    justify-content: space-between;
    padding-top: 14px;
}
.info {
    color: #64748b;
}
.pagination {
    display: flex;
    gap: 4px;
    margin-top: 8px;
}
.pagination a {
    height: 36px;
    border: 1px solid #f5f5f7;
    border-radius: 6px;
    line-height: 35px;
    text-align: center;
    color: #c6cbd2;
}
.pagination span {
    font-family: "Liberation Sans", sans-serif;
}
.pagination .prev {
    width: 115px;
}
.pagination .next {
    width: 105px;
}
.pagination .current {
    width: 37px;
    border-color: #2196f3;
    background-color: #2196f3;
    color: #fff;
}
```
